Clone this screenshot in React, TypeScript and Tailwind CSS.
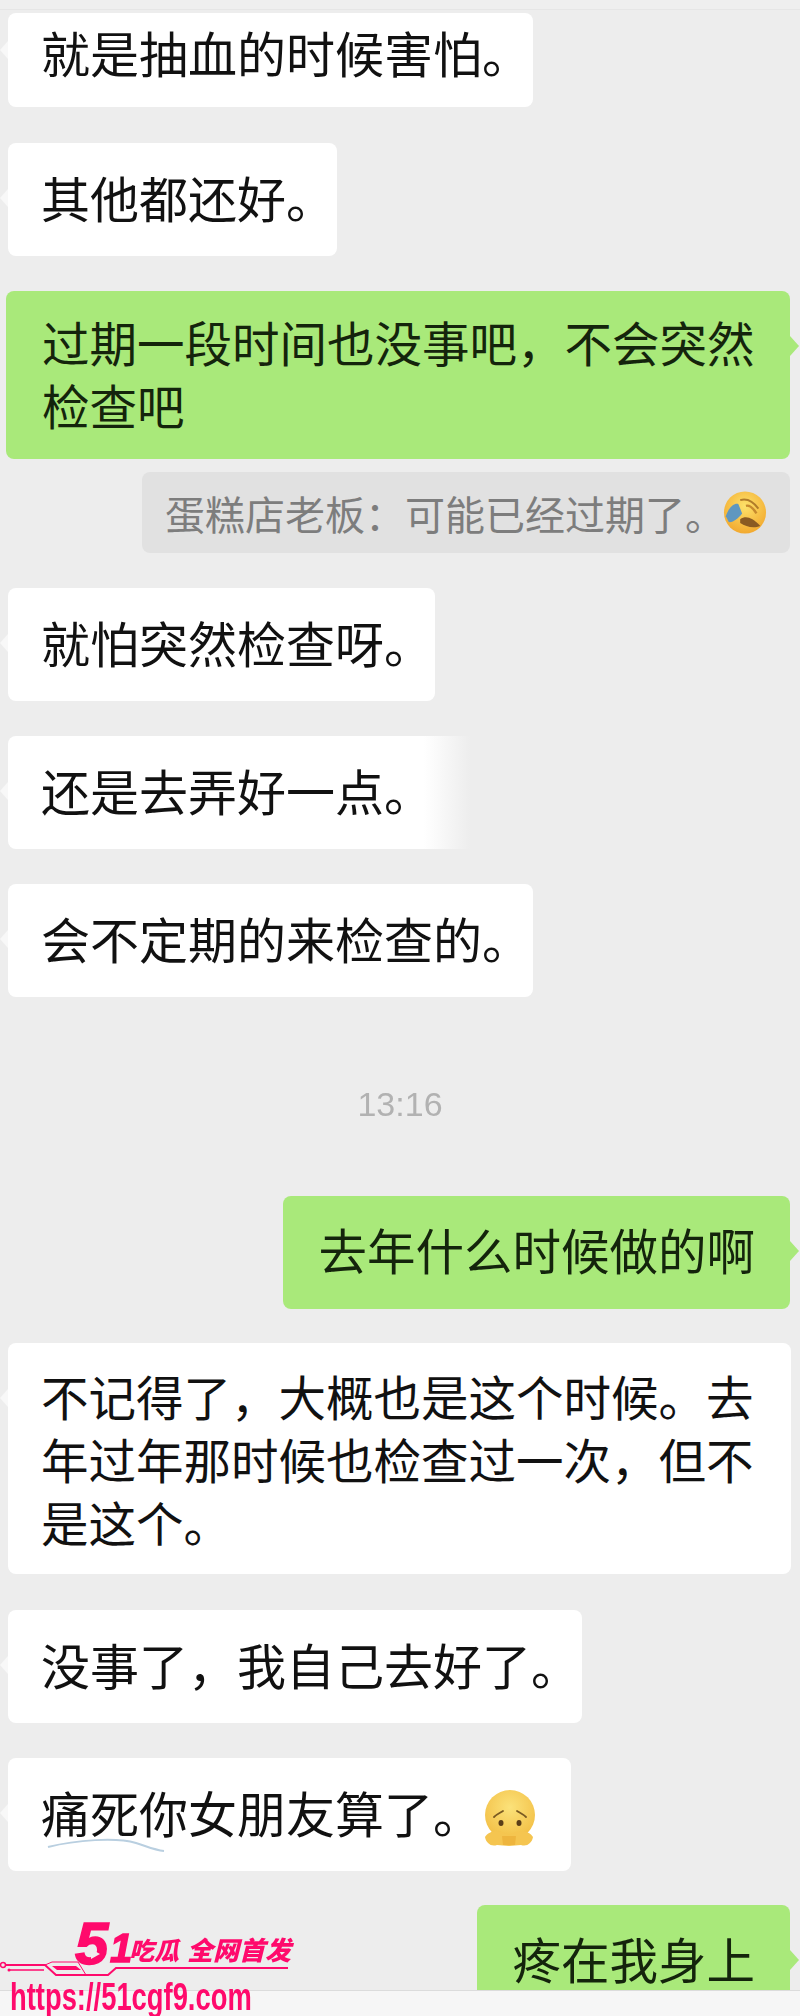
const CJK = 'font-["Noto_Sans_CJK_SC","Noto_Sans",sans-serif]';

function CryEmoji() {
  return (
    <svg width="44" height="45" viewBox="0 0 46 46" className="ml-[-2px] shrink-0">
      <defs>
        <radialGradient id="cry" cx="50%" cy="35%" r="65%">
          <stop offset="0%" stopColor="#fde26a" />
          <stop offset="100%" stopColor="#f2a92f" />
        </radialGradient>
      </defs>
      <circle cx="23" cy="23" r="22" fill="url(#cry)" />
      <path d="M3 27 C5 20 10 13 16 14 L20 24 C16 29 10 34 6 33 Z" fill="#5f97c0" />
      <path d="M18 10 C25 8 32 12 37 19" stroke="#b07c2a" strokeWidth="2" fill="none" />
      <path d="M18 30 C24 26 30 28 39 37 C32 40 24 38 18 34 Z" fill="#8a5a22" />
      <path d="M24 16 C28 15 32 19 35 24" stroke="#c78a2e" strokeWidth="2.5" fill="none" />
    </svg>
  );
}

function SadEmoji() {
  return (
    <svg width="54" height="58" viewBox="0 0 54 58" className="mb-[-5px] mt-[10px] shrink-0">
      <defs>
        <radialGradient id="sad" cx="50%" cy="35%" r="65%">
          <stop offset="0%" stopColor="#fbe27a" />
          <stop offset="100%" stopColor="#f3bf45" />
        </radialGradient>
      </defs>
      <circle cx="28" cy="25" r="25" fill="url(#sad)" />
      <path d="M12 27 C15 24 18 23 21 21" stroke="#7a5a22" strokeWidth="1.8" fill="none" strokeLinecap="round" />
      <path d="M44 27 C41 24 38 23 35 21" stroke="#7a5a22" strokeWidth="1.8" fill="none" strokeLinecap="round" />
      <ellipse cx="19" cy="33" rx="2.5" ry="3" fill="#5a3d18" />
      <ellipse cx="37" cy="33" rx="2.5" ry="3" fill="#5a3d18" />
      <path d="M3 47 C6 42 13 40 20 42 L27 45 L34 42 C41 40 48 42 51 47 C50 53 45 57 39 55 L27 56 L15 55 C9 57 4 53 3 47 Z" fill="#f5c550" />
      <path d="M20 46 L34 46 L33 55 L21 55 Z" fill="#eeb53e" />
    </svg>
  );
}

function LeftTail({ className = 'top-[46px]' }: { className?: string }) {
  return <div className={`absolute left-[-8px] h-0 w-0 border-y-[9px] border-r-[8px] border-y-transparent border-r-[#f8f8f8] ${className}`} />;
}

function RightTail() {
  return <div className="absolute right-[-9px] top-[45px] h-0 w-0 border-y-[10px] border-l-[9px] border-y-transparent border-l-[#a9e97a]" />;
}

function Left({ text, className = '', children }: { text: string; className?: string; children?: React.ReactNode }) {
  return (
    <div className={`relative ml-[8px] flex w-fit rounded-[8px] bg-white pb-[28px] pl-[33px] pr-[2px] pt-[22px] text-[49px] leading-[63px] text-[#111111] ${className}`}>
      <LeftTail />
      <span className="whitespace-nowrap">{text}</span>
      {children}
    </div>
  );
}

function Right({ text, className = '' }: { text: string; className?: string }) {
  return (
    <div className={`relative ml-auto mr-[10px] w-fit rounded-[8px] bg-[#a9e97a] pb-[28px] pl-[35px] pr-[35px] pt-[22px] text-[48.5px] leading-[63px] whitespace-nowrap text-[#14240c] ${className}`}>
      <RightTail />
      {text}
    </div>
  );
}

function Watermark() {
  return (
    <div className="pointer-events-none absolute bottom-0 left-0 h-[100px] w-[300px] font-['Liberation_Sans',sans-serif] text-[#ff0a6c]">
      <div className="absolute left-[75px] top-[-4px] text-[60px] font-bold italic leading-[64px] [-webkit-text-stroke:1.5px_#ff0a6c]">5</div>
      <div className="absolute left-[110px] top-[10px] text-[40px] font-bold italic leading-[44px] [-webkit-text-stroke:1.5px_#ff0a6c]">1</div>
      <svg className="absolute left-[89px] top-[32px]" width="12" height="12" viewBox="0 0 12 12">
        <path d="M2 1 L11 6 L2 11 Z" fill="#eeeeee" />
      </svg>
      <div className={`absolute left-[129px] top-[18px] text-[25px] font-black italic leading-[30px] ${CJK}`}>吃瓜</div>
      <div className={`absolute left-[187px] top-[18px] text-[26px] font-black italic leading-[30px] ${CJK}`}>全网首发</div>
      <svg className="absolute left-0 top-[44px]" width="290" height="18" viewBox="0 0 290 18">
        <circle cx="3" cy="5" r="2.5" fill="none" stroke="#ff0a6c" strokeWidth="1.5" />
        <circle cx="9" cy="10" r="1.5" fill="#ff0a6c" />
        <path d="M5 5 H45 L56 15 H108 L116 8 H288" fill="none" stroke="#ff0a6c" strokeWidth="2" />
        <path d="M9 10 H44" stroke="#ff0a6c" strokeWidth="1.5" />
        <path d="M45 5 L52 2 H78 L86 15" fill="none" stroke="#ff0a6c" strokeWidth="1" />
        <path d="M52 6 H76 L81 10 H57 Z" fill="#ff0a6c" />
      </svg>
      <div className="absolute left-[10px] top-[61px] origin-left scale-x-[0.72] whitespace-nowrap text-[38px] font-bold leading-[40px]">https://51cgf9.com</div>
    </div>
  );
}

export default function App() {
  return (
    <div className={`relative h-[2016px] w-[800px] overflow-hidden bg-[#ededed] ${CJK}`}>
      <div className="h-[1990px] overflow-hidden blur-[0.5px]">
        <div className="h-[10px] border-b border-[#e6e6e6] bg-[#efefef]" />
        <div className="flex flex-col pt-[3px]">
          <div className="relative ml-[8px] w-[525px] rounded-[8px] bg-white pb-[24px] pl-[33px] pt-[7px] text-[49px] leading-[63px] text-[#111111]">
            <LeftTail className="top-[28px]" />
            就是抽血的时候害怕。
          </div>
          <Left text="其他都还好。" className="mt-[36px]" />
          <div className="relative ml-[6px] mr-[10px] mt-[35px] rounded-[8px] bg-[#a9e97a] pb-[23px] pl-[36px] pt-[19px] text-[47.5px] leading-[63px] whitespace-nowrap text-[#14240c]">
            <RightTail />
            过期一段时间也没事吧，不会突然
            <br />
            检查吧
          </div>
          <div className="ml-auto mr-[10px] mt-[13px] flex h-[81px] w-[648px] items-center rounded-[8px] bg-[#e1e1e1] pl-[23px] text-[40px] text-[#7d7d7d]">
            <span className="whitespace-nowrap">蛋糕店老板：可能已经过期了。</span>
            <CryEmoji />
          </div>
          <Left text="就怕突然检查呀。" className="mt-[35px]" />
          <div className="relative ml-[8px] mt-[35px] w-[462px] rounded-l-[8px] bg-gradient-to-r from-white from-[90%] to-[#ededed] pb-[28px] pl-[33px] pt-[22px] text-[49px] leading-[63px] text-[#111111]">
            <LeftTail />
            还是去弄好一点。
          </div>
          <Left text="会不定期的来检查的。" className="mt-[35px]" />
          <div className="mt-[86px] text-center font-['Liberation_Sans',sans-serif] text-[34px] leading-[42px] text-[#b2b2b2]">13:16</div>
          <Right text="去年什么时候做的啊" className="mt-[71px]" />
          <div className="relative ml-[8px] mr-[9px] mt-[34px] rounded-[8px] bg-white py-[21px] pl-[33px] text-[47.5px] leading-[63px] whitespace-nowrap text-[#111111]">
            <LeftTail />
            不记得了，大概也是这个时候。去
            <br />
            年过年那时候也检查过一次，但不
            <br />
            是这个。
          </div>
          <Left text="没事了，我自己去好了。" className="mt-[36px]" />
          <Left text="痛死你女朋友算了。" className="mt-[35px] !pr-[35px]">
            <SadEmoji />
            <svg className="absolute left-[38px] top-[80px]" width="124" height="16" viewBox="0 0 124 16">
              <path d="M2 9 C30 2 70 -1 90 5 C100 8 108 12 118 13" stroke="#b9cfe0" strokeWidth="2" fill="none" />
            </svg>
          </Left>
          <Right text="疼在我身上" className="mt-[34px]" />
        </div>
      </div>
      <div className="h-[26px] border-t border-[#dcdcdc] bg-[#f6f6f6]" />
      <Watermark />
    </div>
  );
}
